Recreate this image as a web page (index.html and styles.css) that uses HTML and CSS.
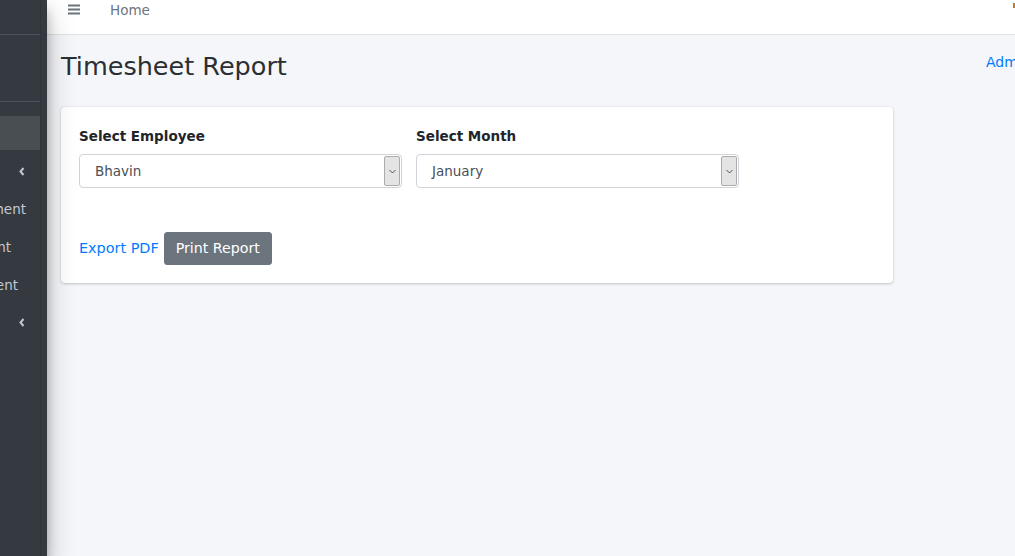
FILE: index.html
```html
<!DOCTYPE html>
<html lang="en">
<head>
<meta charset="utf-8">
<title>Timesheet Report</title>
<link rel="stylesheet" href="styles.css">
</head>
<body>
<div class="app">
  <aside class="sidebar">
    <div class="sidebar-inner">
      <div class="brand"></div>
      <div class="user-panel"></div>
      <ul class="nav">
        <li class="nav-item active"><a class="nav-link"><span class="nav-text">Dashboard</span></a></li>
        <li class="nav-item"><a class="nav-link pr-chev"><span class="nav-text">Masters</span>
          <svg class="chev" width="6" height="9" viewBox="0 0 6 9"><polyline points="4.5,1 1.5,4.5 4.5,8" fill="none" stroke="#c2c7d0" stroke-width="2"/></svg></a></li>
        <li class="nav-item"><a class="nav-link pr-14"><span class="nav-text">Employee Management</span></a></li>
        <li class="nav-item"><a class="nav-link pr-29"><span class="nav-text">Client</span></a></li>
        <li class="nav-item"><a class="nav-link pr-22"><span class="nav-text">Project Assignment</span></a></li>
        <li class="nav-item"><a class="nav-link pr-chev"><span class="nav-text">Reports</span>
          <svg class="chev" width="6" height="9" viewBox="0 0 6 9"><polyline points="4.5,1 1.5,4.5 4.5,8" fill="none" stroke="#c2c7d0" stroke-width="2"/></svg></a></li>
      </ul>
    </div>
  </aside>
  <div class="main">
    <nav class="navbar">
      <a class="menu-toggle" aria-label="Menu">
        <svg width="12" height="11" viewBox="0 0 12 11"><rect x="0" y="0.5" width="12" height="2" fill="#6c757d"/><rect x="0" y="4.5" width="12" height="2" fill="#6c757d"/><rect x="0" y="8.5" width="12" height="2" fill="#6c757d"/></svg>
      </a>
      <a class="nav-home">Home</a>
      <span class="badge"></span>
    </nav>
    <div class="content-header">
      <h1 class="page-title">Timesheet Report</h1>
      <div class="breadcrumb"><a>Admin</a> / Timesheet Report</div>
    </div>
    <section class="card">
      <div class="form-grid">
        <div class="form-group">
          <label class="form-label">Select Employee</label>
          <div class="select">
            <span class="select-value">Bhavin</span>
            <span class="select-btn"><svg width="7" height="5" viewBox="0 0 7 5"><polyline points="0.5,1 3.5,4 6.5,1" fill="none" stroke="#555" stroke-width="1"/></svg></span>
          </div>
        </div>
        <div class="form-group">
          <label class="form-label">Select Month</label>
          <div class="select">
            <span class="select-value">January</span>
            <span class="select-btn"><svg width="7" height="5" viewBox="0 0 7 5"><polyline points="0.5,1 3.5,4 6.5,1" fill="none" stroke="#555" stroke-width="1"/></svg></span>
          </div>
        </div>
      </div>
      <div class="actions">
        <a class="link">Export PDF</a>
        <button class="btn">Print Report</button>
      </div>
    </section>
  </div>
</div>
</body>
</html>
```
FILE: styles.css
```css
* { box-sizing: border-box; }
html, body { margin: 0; padding: 0; }
body {
  font-family: "DejaVu Sans", Verdana, sans-serif;
  font-size: 13.5px;
  color: #212529;
  background: #f4f6f9;
  width: 1015px;
  height: 556px;
  overflow: hidden;
}
.app { display: flex; height: 556px; }

.sidebar {
  flex: none;
  width: 47px;
  height: 556px;
  background: #343a40;
  box-shadow: 0 14px 28px rgba(0,0,0,.25), 0 10px 10px rgba(0,0,0,.22);
  position: relative;
  z-index: 2;
}
.sidebar-inner {
  width: 41px;
  height: 100%;
  border-right: 1px solid #2f3439;
  overflow: hidden;
}
.brand { height: 35px; border-bottom: 1px solid #4b545c; }
.user-panel { height: 67px; border-bottom: 1px solid #4b545c; }
.nav { list-style: none; margin: 14px 0 0; padding: 0; }
.nav-item { height: 34px; margin-bottom: 3.8px; }
.nav-item.active { background: #494e53; }
.nav-link {
  display: flex;
  align-items: center;
  justify-content: flex-end;
  height: 34px;
  padding-top: 1px;
  color: #c2c7d0;
  white-space: nowrap;
  overflow: hidden;
}
.nav-item.active .nav-text { display: none; }
.nav-link .chev { flex: none; }
.pr-chev .nav-text { display: none; }
.pr-chev { padding-right: 15px; }
.pr-14 { padding-right: 14px; }
.pr-29 { padding-right: 29px; }
.pr-22 { padding-right: 22px; }

.main { flex: 1; min-width: 0; overflow: hidden; position: relative; }
.navbar {
  height: 35px;
  background: #fff;
  border-bottom: 1px solid #dee2e6;
  display: flex;
  align-items: flex-start;
  padding-left: 21px;
  position: relative;
}
.menu-toggle { display: block; height: 20px; padding-top: 4px; }
.menu-toggle svg { display: block; }
.nav-home { margin-left: 30px; line-height: 20px; color: #6c757d; font-size: 13.5px; }
.badge {
  position: absolute;
  right: 0;
  top: 3px;
  width: 2px;
  height: 5px;
  background: #c97a1e;
}

.content-header {
  display: flex;
  align-items: flex-start;
  padding-left: 14px;
  margin-top: 15.5px;
}
.page-title {
  flex: none;
  width: 925px;
  margin: 0;
  font-size: 25.5px;
  font-weight: 400;
  line-height: 30.6px;
  color: #2b2f33;
}
.breadcrumb {
  flex: none;
  white-space: nowrap;
  font-size: 14px;
  line-height: 20px;
  margin-top: 1px;
  color: #6c757d;
}
.breadcrumb a { color: #007bff; }

.card {
  width: 832px;
  margin: 26px 0 0 14px;
  background: #fff;
  border-radius: 4px;
  box-shadow: 0 0 1px rgba(0,0,0,.125), 0 1px 3px rgba(0,0,0,.2);
  padding: 19px 18px 18px;
}
.form-grid { display: grid; grid-template-columns: 323px 323px; column-gap: 14px; }
.form-label {
  display: block;
  font-weight: 700;
  line-height: 20px;
  margin-bottom: 8px;
  color: #212529;
}
.select {
  display: flex;
  height: 34px;
  border: 1px solid #ced4da;
  border-radius: 4px;
  background: #fff;
  padding: 1px 1px 1px 0;
}
.select-value {
  flex: 1;
  padding-left: 15px;
  line-height: 30px;
  color: #495057;
}
.select-btn {
  flex: none;
  width: 16px;
  background: #e4e4e4;
  border: 1px solid #acacac;
  border-radius: 2px;
  display: flex;
  align-items: center;
  justify-content: center;
}
.select-btn svg { display: block; }

.actions {
  display: flex;
  align-items: center;
  gap: 5px;
  margin-top: 43.5px;
}
.link { color: #007bff; font-size: 14.4px; line-height: 20px; }
.btn {
  font-family: inherit;
  font-size: 14.2px;
  line-height: 20px;
  height: 33px;
  padding: 0 11px;
  background: #6c757d;
  border: 1px solid #6c757d;
  border-radius: 3px;
  color: #fff;
}
```
